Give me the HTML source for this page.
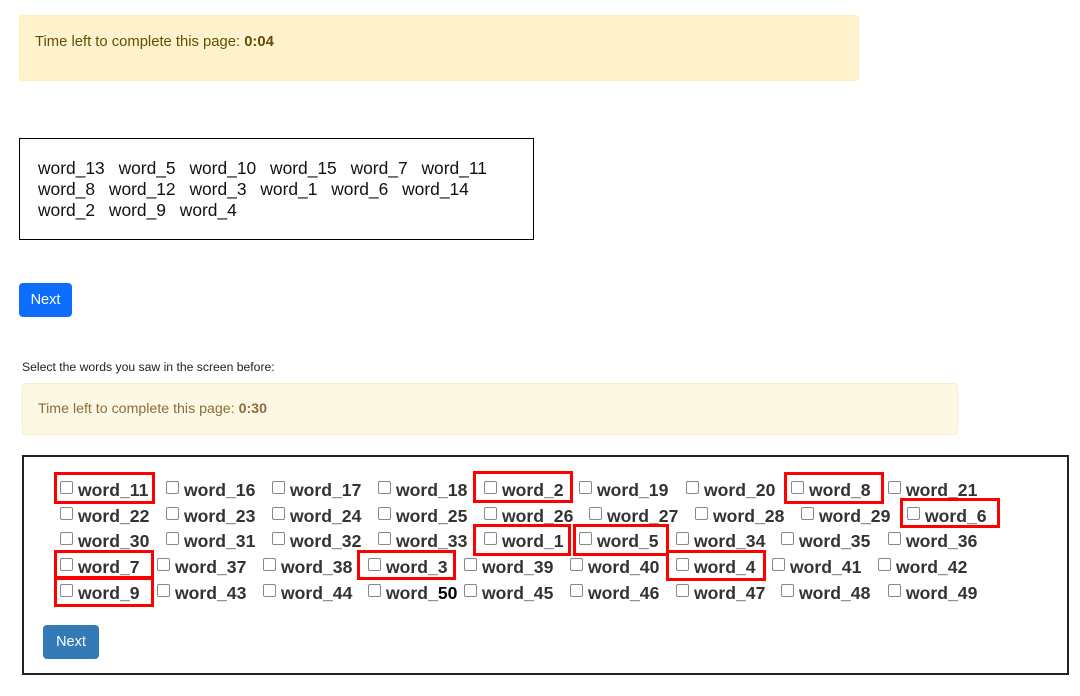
<!DOCTYPE html>
<html><head><meta charset="utf-8"><style>
body{margin:0;width:1080px;height:696px;background:#fff;font-family:"Liberation Sans",Arial,sans-serif;position:relative;overflow:hidden}
.a1{position:absolute;left:19px;top:15px;width:840px;height:66px;background:#fff3cd;border:1px solid #ffeeba;border-radius:4px;box-sizing:border-box;color:#664d03;font-size:14.8px;padding:18px 15px;line-height:16px}
.box1{position:absolute;left:19px;top:138px;width:515px;height:102px;border:1px solid #000;box-sizing:border-box;padding:19px 18px;font-size:17.4px;line-height:21px;color:#111}
.box1 span{margin-right:9px}
.btn1{position:absolute;left:19px;top:283px;width:53px;height:34px;background:#0d6efd;border-radius:4px;color:#fff;font-size:14.5px;line-height:34px;text-align:center}
.lbl{position:absolute;left:22px;top:360px;font-size:12.2px;color:#222}
.a2{position:absolute;left:22px;top:383px;width:936px;height:52px;background:#fcf8e3;border:1px solid #faebcc;border-radius:4px;box-sizing:border-box;color:#8a6d3b;font-size:14.2px;padding:17px 15px;line-height:16px}
.box2{position:absolute;left:22px;top:455px;width:1047px;height:220px;border:2px solid #222;box-sizing:border-box}
.btn2{position:absolute;left:43px;top:625px;width:56px;height:34px;background:#337ab7;border-radius:4px;color:#fff;font-size:14.5px;line-height:34px;text-align:center}
.w{position:absolute;font-size:17.6px;font-weight:bold;color:#333;line-height:20px;white-space:nowrap}
.w i{position:absolute;left:-18px;top:1px;width:11px;height:11px;border:1px solid #888;border-radius:2px;background:#fff}
.r{position:absolute;border:3px solid #f00;box-sizing:border-box}
</style></head><body>
<div class="a1">Time left to complete this page: <b>0:04</b></div>
<div class="box1"><span>word_13</span> <span>word_5</span> <span>word_10</span> <span>word_15</span> <span>word_7</span> <span>word_11</span><br><span>word_8</span> <span>word_12</span> <span>word_3</span> <span>word_1</span> <span>word_6</span> <span>word_14</span><br><span>word_2</span> <span>word_9</span> <span>word_4</span></div>
<div class="btn1">Next</div>
<div class="lbl">Select the words you saw in the screen before:</div>
<div class="a2">Time left to complete this page: <b>0:30</b></div>
<div class="box2"></div>

<div class="w" style="left:78px;top:480px"><i></i>word_11</div>
<div class="w" style="left:184px;top:480px"><i></i>word_16</div>
<div class="w" style="left:290px;top:480px"><i></i>word_17</div>
<div class="w" style="left:396px;top:480px"><i></i>word_18</div>
<div class="w" style="left:502px;top:480px"><i></i>word_2</div>
<div class="w" style="left:597px;top:480px"><i></i>word_19</div>
<div class="w" style="left:704px;top:480px"><i></i>word_20</div>
<div class="w" style="left:809px;top:480px"><i></i>word_8</div>
<div class="w" style="left:906px;top:480px"><i></i>word_21</div>

<div class="w" style="left:78px;top:506px"><i></i>word_22</div>
<div class="w" style="left:184px;top:506px"><i></i>word_23</div>
<div class="w" style="left:290px;top:506px"><i></i>word_24</div>
<div class="w" style="left:396px;top:506px"><i></i>word_25</div>
<div class="w" style="left:502px;top:506px"><i></i>word_26</div>
<div class="w" style="left:607px;top:506px"><i></i>word_27</div>
<div class="w" style="left:713px;top:506px"><i></i>word_28</div>
<div class="w" style="left:819px;top:506px"><i></i>word_29</div>
<div class="w" style="left:925px;top:506px"><i></i>word_6</div>

<div class="w" style="left:78px;top:531px"><i></i>word_30</div>
<div class="w" style="left:184px;top:531px"><i></i>word_31</div>
<div class="w" style="left:290px;top:531px"><i></i>word_32</div>
<div class="w" style="left:396px;top:531px"><i></i>word_33</div>
<div class="w" style="left:502px;top:531px"><i></i>word_1</div>
<div class="w" style="left:597px;top:531px"><i></i>word_5</div>
<div class="w" style="left:694px;top:531px"><i></i>word_34</div>
<div class="w" style="left:799px;top:531px"><i></i>word_35</div>
<div class="w" style="left:906px;top:531px"><i></i>word_36</div>

<div class="w" style="left:78px;top:557px"><i></i>word_7</div>
<div class="w" style="left:175px;top:557px"><i></i>word_37</div>
<div class="w" style="left:281px;top:557px"><i></i>word_38</div>
<div class="w" style="left:386px;top:557px"><i></i>word_3</div>
<div class="w" style="left:482px;top:557px"><i></i>word_39</div>
<div class="w" style="left:588px;top:557px"><i></i>word_40</div>
<div class="w" style="left:694px;top:557px"><i></i>word_4</div>
<div class="w" style="left:790px;top:557px"><i></i>word_41</div>
<div class="w" style="left:896px;top:557px"><i></i>word_42</div>

<div class="w" style="left:78px;top:583px"><i></i>word_9</div>
<div class="w" style="left:175px;top:583px"><i></i>word_43</div>
<div class="w" style="left:281px;top:583px"><i></i>word_44</div>
<div class="w" style="left:386px;top:583px"><i></i>word_<span style="color:#000">50</span></div>
<div class="w" style="left:482px;top:583px"><i></i>word_45</div>
<div class="w" style="left:588px;top:583px"><i></i>word_46</div>
<div class="w" style="left:694px;top:583px"><i></i>word_47</div>
<div class="w" style="left:799px;top:583px"><i></i>word_48</div>
<div class="w" style="left:906px;top:583px"><i></i>word_49</div>

<div class="r" style="left:54px;top:472px;width:101px;height:32px"></div>
<div class="r" style="left:473px;top:471px;width:100px;height:32px"></div>
<div class="r" style="left:784px;top:472px;width:100px;height:32px"></div>
<div class="r" style="left:900px;top:498px;width:100px;height:30px"></div>
<div class="r" style="left:473px;top:524px;width:98px;height:32px"></div>
<div class="r" style="left:573px;top:524px;width:96px;height:32px"></div>
<div class="r" style="left:54px;top:550px;width:100px;height:30px"></div>
<div class="r" style="left:357px;top:550px;width:99px;height:30px"></div>
<div class="r" style="left:666px;top:550px;width:100px;height:31px"></div>
<div class="r" style="left:54px;top:576px;width:100px;height:31px"></div>

<div class="btn2">Next</div>
</body></html>
